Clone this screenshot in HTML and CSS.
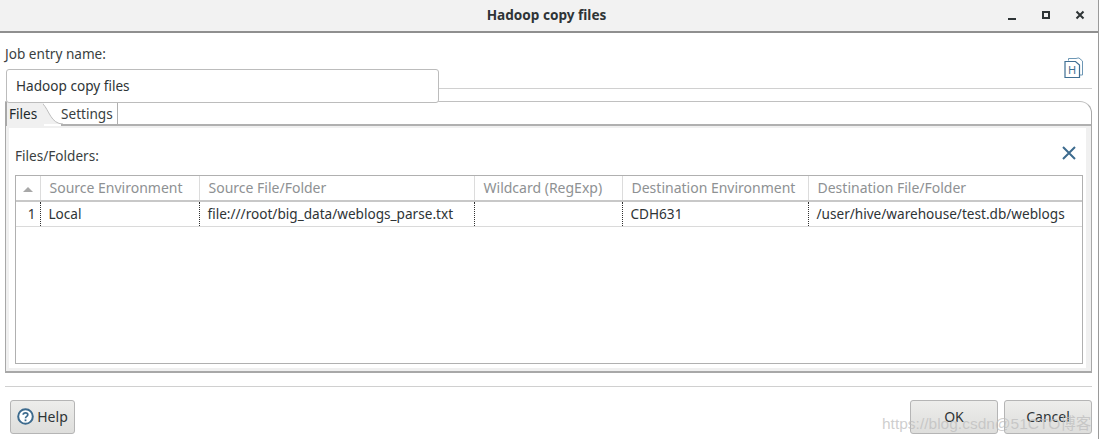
FILE: index.html
```html
<!DOCTYPE html>
<html>
<head>
  <title>Hadoop copy files</title>
  <link rel="stylesheet" href="styles.css">
</head>
<body>
  <div class="titlebar">
    <div class="title">Hadoop copy files</div>
    <div class="win-buttons">
      <svg width="12" height="12" viewBox="0 0 12 12"><rect x="2" y="9" width="8" height="2" fill="#2e3436"/></svg>
      <svg width="12" height="12" viewBox="0 0 12 12"><rect x="3" y="3" width="6" height="6" fill="none" stroke="#2e3436" stroke-width="2"/></svg>
      <svg width="12" height="12" viewBox="0 0 12 12"><path d="M2.5 2.5 L9.5 9.5 M9.5 2.5 L2.5 9.5" stroke="#2e3436" stroke-width="2"/></svg>
    </div>
  </div>

  <div class="content">
    <div class="name-label">Job entry name:</div>
    <div class="name-row">
      <div class="name-input">Hadoop copy files</div>
      <div class="name-rule"></div>
      <svg class="job-icon" width="20" height="22" viewBox="0 0 20 22">
        <path d="M4.5 3.5 V1.5 H12 L14 1 H15 L18.5 4 V18 H15.5" fill="#fff" stroke="#6d97b5"/>
        <path d="M1 4.5 H11.5 L15.5 8 V20.5 H1 Z" fill="#fff" stroke="#3f6f93" stroke-width="1.2"/>
        <text x="8.2" y="17" class="job-icon-text">H</text>
      </svg>
    </div>

    <div class="folder">
      <div class="tabs">
        <div class="tab tab-active">Files</div>
        <svg class="tab-curve" width="20" height="21" viewBox="0 0 20 21">
          <path d="M0 0 C6 6 8 20 20 20 L0 20 Z" fill="#f0f0f0"/>
          <path d="M0 0 C6 6 8 20 20 20" fill="none" stroke="#bdbdbd"/>
        </svg>
        <div class="tab tab-other">Settings</div>
        <div class="tab-fill"></div>
      </div>
      <div class="folder-body">
        <div class="files-head">
          <span>Files/Folders:</span>
          <svg width="16" height="16" viewBox="0 0 16 16"><path d="M2 2 L14 14 M14 2 L2 14" stroke="#3d6b8e" stroke-width="2"/></svg>
        </div>
        <div class="table-box">
          <table class="grid">
            <colgroup>
              <col class="c0"><col class="c1"><col class="c2"><col class="c3"><col class="c4"><col>
            </colgroup>
            <thead>
              <tr>
                <th class="sort"><span class="arrow"></span></th>
                <th>Source Environment</th>
                <th>Source File/Folder</th>
                <th>Wildcard (RegExp)</th>
                <th>Destination Environment</th>
                <th>Destination File/Folder</th>
              </tr>
            </thead>
            <tbody>
              <tr>
                <td class="num">1</td>
                <td>Local</td>
                <td>file:///root/big_data/weblogs_parse.txt</td>
                <td></td>
                <td>CDH631</td>
                <td>/user/hive/warehouse/test.db/weblogs</td>
              </tr>
            </tbody>
          </table>
        </div>
      </div>
    </div>

    <div class="footer">
      <button class="btn btn-help">
        <svg width="17" height="17" viewBox="0 0 17 17">
          <circle cx="8.5" cy="8.5" r="7.3" fill="#fff" stroke="#3d6b8e" stroke-width="2"/>
          <path d="M6.2 6.8 C6.2 4.2 10.8 4.2 10.8 6.8 C10.8 8.4 8.5 8.3 8.5 10.2" fill="none" stroke="#3d6b8e" stroke-width="1.7"/>
          <rect x="7.6" y="11.4" width="1.8" height="1.8" fill="#3d6b8e"/>
        </svg>
        Help
      </button>
      <div class="footer-right">
        <button class="btn btn-wide">OK</button>
        <button class="btn btn-wide">Cancel</button>
      </div>
    </div>
  </div>

  <div class="watermark">https://blog.csdn@51CTO博客</div>
</body>
</html>
```

FILE: styles.css
```css
html, body {
  margin: 0;
  padding: 0;
}

body {
  width: 1099px;
  height: 439px;
  overflow: hidden;
  position: relative;
  background-color: #fff;
  font-family: "Noto Sans", "Noto Sans CJK SC", sans-serif;
  font-size: 13.6px;
  color: #2e3436;
  box-sizing: border-box;
  border-right: 1px solid #9a9a9a;
}

.titlebar {
  height: 33px;
  box-sizing: border-box;
  background-color: #f2f2f2;
  border-bottom: 2px solid #8f8f8f;
  display: flex;
  align-items: center;
  justify-content: center;
  position: relative;
}

.title {
  font-weight: bold;
  font-size: 13.6px;
  margin: 0 5px 2px 0;
}

.win-buttons {
  position: absolute;
  right: 12px;
  top: 9px;
  display: flex;
  gap: 22px;
}

.content {
  padding: 0 6px 0 5px;
}

.name-label {
  height: 36px;
  line-height: 42px;
  color: #3a3f41;
}

.name-row {
  display: flex;
  align-items: center;
  position: relative;
  height: 34px;
  z-index: 2;
}

.name-input {
  width: 433px;
  height: 34px;
  margin-left: 1px;
  box-sizing: border-box;
  border: 1px solid #bcbcbc;
  border-radius: 3px;
  background-color: #fff;
  padding-left: 9px;
  line-height: 32px;
  flex: none;
}

.name-rule {
  flex: 1;
  height: 1px;
  background-color: #d0d0d0;
  margin-top: 4px;
}

.job-icon {
  position: absolute;
  right: 8px;
  top: -12px;
}

.job-icon-text {
  font-size: 11px;
  fill: #3f6f93;
  text-anchor: middle;
}

.folder {
  height: 272px;
  margin-top: -2px;
  box-sizing: border-box;
  border: 1px solid #a8a8a8;
  border-top-color: #c0c0c0;
  border-radius: 0 12px 0 0;
  border-bottom: 2px solid #a8a8a8;
  display: flex;
  flex-direction: column;
  position: relative;
}

.tabs {
  height: 24px;
  flex: none;
  display: flex;
  align-items: stretch;
}

.tab {
  padding-top: 2px;
  line-height: 20px;
  flex: none;
}

.tab-active {
  width: 38px;
  padding-left: 2px;
  background-color: #f0f0f0;
  color: #20292c;
  box-sizing: border-box;
  border-left: 1px solid #a8a8a8;
}

.tab-curve {
  flex: none;
  margin-top: 2px;
  margin-left: -1px;
}

.tab-other {
  width: 57px;
  margin-left: -2px;
  color: #3a3f41;
  box-sizing: border-box;
  border-right: 1px solid #b0b0b0;
  border-bottom: 2px solid #b0b0b0;
}

.tab-fill {
  flex: 1;
  border-bottom: 2px solid #b0b0b0;
}

.folder-body {
  flex: 1;
  border: 3px solid #f0f0f0;
  border-top-width: 2px;
  border-right-width: 5px;
  padding: 0 3px 0 6px;
  display: flex;
  flex-direction: column;
}

.files-head {
  height: 47px;
  box-sizing: border-box;
  padding: 7px 6px 0 0;
  flex: none;
  display: flex;
  align-items: center;
  justify-content: space-between;
  color: #3a3f41;
}

.files-head svg {
  margin-bottom: 4px;
}

.table-box {
  height: 189px;
  flex: none;
  box-sizing: border-box;
  border: 1px solid #b0b0b0;
}

.grid {
  width: 100%;
  border-collapse: collapse;
  table-layout: fixed;
}

.c0 { width: 24px; }
.c1 { width: 159px; }
.c2 { width: 275px; }
.c3 { width: 148px; }
.c4 { width: 186px; }

.grid th {
  height: 25px;
  padding: 0 0 2px 9px;
  box-sizing: border-box;
  text-align: left;
  font-size: 14px;
  font-weight: normal;
  color: #8e9193;
  border-left: 1px solid #dcdcdc;
  border-bottom: 2px solid #c8c8c8;
  white-space: nowrap;
}

.grid th:first-child {
  border-left: none;
}

.grid th.sort {
  text-align: center;
  padding: 0;
}

.arrow {
  display: inline-block;
  border-left: 5px solid transparent;
  border-right: 5px solid transparent;
  border-bottom: 5px solid #a8a8a8;
  margin-bottom: 2px;
}

.grid td {
  height: 25px;
  padding: 0 0 1px 8px;
  box-sizing: border-box;
  color: #2e3436;
  border-left: 1px dotted #303030;
  border-bottom: 1px solid #dadada;
  white-space: nowrap;
  overflow: hidden;
}

.grid td:first-child {
  border-left: none;
}

.grid td.num {
  text-align: right;
  padding: 0 4px 1px 0;
}

.footer {
  margin-top: 13px;
  border-top: 1px solid #d0d0d0;
  padding: 13px 0 0 5px;
  display: flex;
  justify-content: space-between;
  align-items: flex-start;
}

.footer-right {
  display: flex;
  gap: 6px;
}

.btn {
  height: 34px;
  box-sizing: border-box;
  border: 1px solid #b5b5b5;
  border-radius: 3px;
  background-color: #e6e6e4;
  background-image: linear-gradient(#ededeb, #dededc);
  font-family: inherit;
  font-size: 14px;
  color: #2e3436;
  padding: 0 0 2px;
}

.btn-help {
  width: 65px;
  display: flex;
  align-items: center;
  justify-content: center;
  gap: 3px;
}

.btn-wide {
  width: 88px;
}

.watermark {
  position: absolute;
  left: 882px;
  top: 411px;
  font-family: "Liberation Sans", "Noto Sans CJK SC", sans-serif;
  font-size: 15.5px;
  color: rgba(190, 190, 190, 0.75);
  white-space: nowrap;
}
```
